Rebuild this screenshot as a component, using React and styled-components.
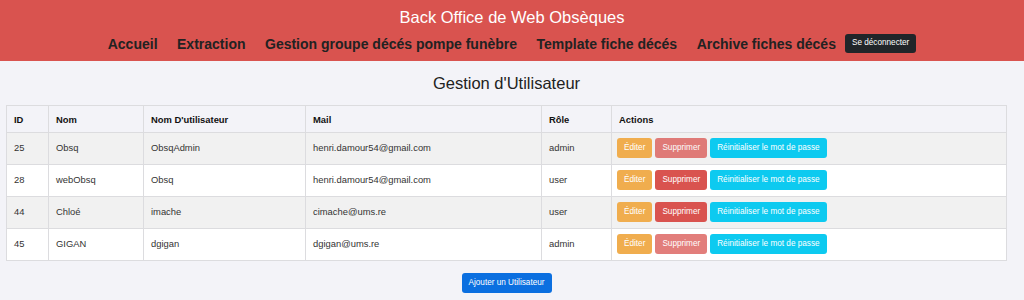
import React from "react";
import styled, { createGlobalStyle } from "styled-components";

const GlobalStyle = createGlobalStyle`
  html, body {
    margin: 0;
    padding: 0;
    background: #f3f3f8;
    font-family: "Liberation Sans", Arial, sans-serif;
  }
`;

const Page = styled.div`
  min-height: 300px;
  background: #f3f3f8;
`;

const Header = styled.header`
  background: #d9534f;
  padding: 6px 0 8px;
  text-align: center;
`;

const Title = styled.h1`
  margin: 0;
  font-size: 16.5px;
  line-height: 22px;
  font-weight: 400;
  color: #fff;
`;

const Nav = styled.nav`
  display: flex;
  justify-content: center;
  align-items: center;
  margin-top: 6px;
  height: 19px;
`;

const NavLink = styled.a`
  margin-right: 19.5px;
  font-size: 14px;
  font-weight: 700;
  color: #222;
  text-decoration: none;
  &:last-of-type {
    margin-right: 9px;
  }
`;

const Button = styled.button`
  font-family: "Liberation Sans", Arial, sans-serif;
  font-size: 8.2px;
  line-height: 1;
  border: 1px solid transparent;
  border-radius: 3px;
  padding: 0 6px;
  height: ${p => p.$h || 20}px;
  color: #fff;
  background: ${p => p.$bg};
  opacity: ${p => (p.$faded ? 0.75 : 1)};
  cursor: pointer;
`;

const Main = styled.main`
  padding: 11px 17px 0 6px;
`;

const Heading = styled.h2`
  margin: 0 0 11px;
  text-align: center;
  font-size: 16.5px;
  line-height: 22px;
  font-weight: 400;
  color: #222;
`;

const Table = styled.table`
  width: 100%;
  table-layout: fixed;
  border-collapse: collapse;
  font-size: 9.4px;
  color: #333;
`;

const Th = styled.th`
  box-sizing: border-box;
  border: 1px solid #dcdcdf;
  padding: 6px 7px 5px;
  line-height: 15px;
  text-align: left;
  font-weight: 700;
  color: #111;
  width: ${p => (p.$w ? `${p.$w}px` : "auto")};
`;

const Tr = styled.tr`
  background: ${p => (p.$odd ? "#f1f1f1" : "#ffffff")};
`;

const Td = styled.td`
  border: 1px solid #dcdcdf;
  padding: 5px 7px 6px;
  line-height: 20px;
  vertical-align: top;
`;

const Actions = styled.div`
  display: flex;
  gap: 3px;
  margin-left: -2px;
`;

const Footer = styled.div`
  display: flex;
  justify-content: center;
  padding-top: 12px;
`;

const users = [
  { id: 25, nom: "Obsq", login: "ObsqAdmin", mail: "henri.damour54@gmail.com", role: "admin" },
  { id: 28, nom: "webObsq", login: "Obsq", mail: "henri.damour54@gmail.com", role: "user" },
  { id: 44, nom: "Chloé", login: "imache", mail: "cimache@ums.re", role: "user" },
  { id: 45, nom: "GIGAN", login: "dgigan", mail: "dgigan@ums.re", role: "admin" },
];

export default function App() {
  return (
    <Page>
      <GlobalStyle />
      <Header>
        <Title>Back Office de Web Obsèques</Title>
        <Nav>
          <NavLink>Accueil</NavLink>
          <NavLink>Extraction</NavLink>
          <NavLink>Gestion groupe décés pompe funèbre</NavLink>
          <NavLink>Template fiche décés</NavLink>
          <NavLink>Archive fiches décés</NavLink>
          <Button $bg="#212529" $h={19}>Se déconnecter</Button>
        </Nav>
      </Header>
      <Main>
        <Heading>Gestion d'Utilisateur</Heading>
        <Table>
          <thead>
            <tr>
              <Th $w={42}>ID</Th>
              <Th $w={95}>Nom</Th>
              <Th $w={162}>Nom D'utilisateur</Th>
              <Th $w={236}>Mail</Th>
              <Th $w={70}>Rôle</Th>
              <Th>Actions</Th>
            </tr>
          </thead>
          <tbody>
            {users.map((u, i) => (
              <Tr key={u.id} $odd={i % 2 === 0}>
                <Td>{u.id}</Td>
                <Td>{u.nom}</Td>
                <Td>{u.login}</Td>
                <Td>{u.mail}</Td>
                <Td>{u.role}</Td>
                <Td>
                  <Actions>
                    <Button $bg="#f0ad4e">Éditer</Button>
                    <Button $bg="#d9534f" $faded={u.role === "admin"}>Supprimer</Button>
                    <Button $bg="#0dcaf0">Réinitialiser le mot de passe</Button>
                  </Actions>
                </Td>
              </Tr>
            ))}
          </tbody>
        </Table>
        <Footer>
          <Button $bg="#0b6fe0">Ajouter un Utilisateur</Button>
        </Footer>
      </Main>
    </Page>
  );
}
